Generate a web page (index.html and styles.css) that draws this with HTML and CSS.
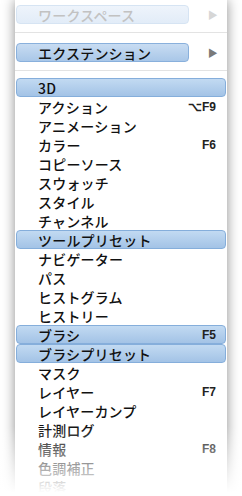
FILE: index.html
```html
<!DOCTYPE html>
<html lang="ja">
<head>
  <meta charset="UTF-8">
  <title>ウィンドウ メニュー</title>
  <link rel="stylesheet" href="styles.css">
</head>
<body>
  <div class="menu">
    <div class="item sub faint">
      <span class="label">ワークスペース</span>
      <span class="arrow">&#9654;</span>
    </div>
    <div class="sep"></div>
    <div class="item sub active">
      <span class="label">エクステンション</span>
      <span class="arrow">&#9654;</span>
    </div>
    <div class="sep last"></div>

    <div class="list">
      <div class="item on"><span class="label">3D</span></div>
      <div class="item"><span class="label">アクション</span><span class="key">&#8997;F9</span></div>
      <div class="item"><span class="label">アニメーション</span></div>
      <div class="item"><span class="label">カラー</span><span class="key">F6</span></div>
      <div class="item"><span class="label">コピーソース</span></div>
      <div class="item"><span class="label">スウォッチ</span></div>
      <div class="item"><span class="label">スタイル</span></div>
      <div class="item"><span class="label">チャンネル</span></div>
      <div class="item on"><span class="label">ツールプリセット</span></div>
      <div class="item"><span class="label">ナビゲーター</span></div>
      <div class="item"><span class="label">パス</span></div>
      <div class="item"><span class="label">ヒストグラム</span></div>
      <div class="item"><span class="label">ヒストリー</span></div>
      <div class="item on"><span class="label">ブラシ</span><span class="key">F5</span></div>
      <div class="item on"><span class="label">ブラシプリセット</span></div>
      <div class="item"><span class="label">マスク</span></div>
      <div class="item"><span class="label">レイヤー</span><span class="key">F7</span></div>
      <div class="item"><span class="label">レイヤーカンプ</span></div>
      <div class="item"><span class="label">計測ログ</span></div>
      <div class="item"><span class="label">情報</span><span class="key">F8</span></div>
      <div class="item"><span class="label">色調補正</span></div>
      <div class="item"><span class="label">段落</span></div>
    </div>
  </div>
  <div class="fade"></div>
</body>
</html>
```

FILE: styles.css
```css
* {
  margin: 0;
  padding: 0;
  box-sizing: border-box;
}

body {
  width: 242px;
  height: 496px;
  overflow: hidden;
  background: #fff;
  font-family: "Noto Sans CJK JP", "Noto Sans", sans-serif;
  position: relative;
}

.menu {
  margin: 0 15px;
  height: 520px;
  padding-top: 5px;
  background: #fff;
  box-shadow: 0 0 12px rgba(0, 0, 0, 0.45);
}

.item {
  display: flex;
  align-items: center;
  height: 19px;
  margin: 0 1px;
  padding: 0 9px 0 21px;
  border: 1px solid transparent;
  border-radius: 4px;
  font-size: 14px;
  font-weight: 500;
  letter-spacing: 0.2px;
  color: #111;
}

.item .label {
  flex: 1;
  white-space: nowrap;
}

.item .key {
  font-family: "Liberation Sans", Arial, sans-serif;
  font-weight: bold;
  font-size: 12px;
  letter-spacing: 0;
  color: #222;
}

.item.on {
  background: linear-gradient(#c2daf2, #a3c3e6);
  border-color: #85aedb;
}

.item.sub {
  position: relative;
  margin-right: 38px;
  overflow: visible;
}

.item.sub .arrow {
  position: absolute;
  right: -30px;
  font-size: 10px;
  color: #7a7a7a;
}

.item.active {
  background: linear-gradient(#c8dcf2, #a9c7e8);
  border-color: #89b0dc;
}

.item.faint {
  background: linear-gradient(#eef4fb, #e2ecf8);
  border-color: #d6e4f3;
  color: #c2c2c2;
}

.item.faint .arrow {
  color: #d6d6d6;
}

.sep {
  height: 1px;
  background: #e3e3e3;
  margin: 8px 0 10px;
}

.sep.last {
  margin: 8px 0 7px;
}

.fade {
  position: absolute;
  left: 0;
  right: 0;
  bottom: 0;
  height: 70px;
  background: linear-gradient(rgba(255, 255, 255, 0), #fff 95%);
}
```
